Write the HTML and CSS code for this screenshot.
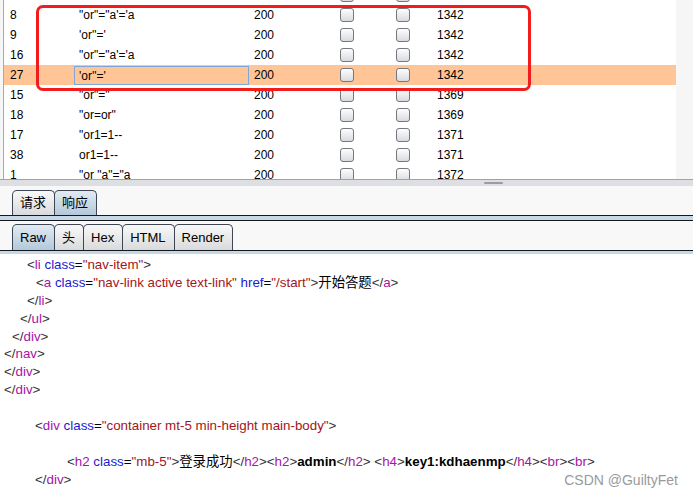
FILE: index.html
```html
<!DOCTYPE html>
<html lang="zh">
<head>
    <meta charset="UTF-8">
    <meta name="viewport" content="width=device-width, initial-scale=1.0">
    <title>Intruder 结果</title>
    <link rel="stylesheet" href="styles.css">
</head>
<body>
    <div class="results">
        <div class="grid">
            <div class="row row--cut">
                <span class="cell"></span>
                <span class="cell"></span>
                <span class="cell"></span>
                <span class="check"><i class="box"></i></span>
                <span class="check"><i class="box"></i></span>
                <span class="cell"></span>
            </div>
            <div class="row">
                <span class="cell">8</span>
                <span class="cell">"or"="a'='a</span>
                <span class="cell">200</span>
                <span class="check"><i class="box"></i></span>
                <span class="check"><i class="box"></i></span>
                <span class="cell">1342</span>
            </div>
            <div class="row">
                <span class="cell">9</span>
                <span class="cell">'or''='</span>
                <span class="cell">200</span>
                <span class="check"><i class="box"></i></span>
                <span class="check"><i class="box"></i></span>
                <span class="cell">1342</span>
            </div>
            <div class="row">
                <span class="cell">16</span>
                <span class="cell">"or"="a'='a</span>
                <span class="cell">200</span>
                <span class="check"><i class="box"></i></span>
                <span class="check"><i class="box"></i></span>
                <span class="cell">1342</span>
            </div>
            <div class="row is-selected">
                <span class="cell">27</span>
                <span class="cell is-editing">'or''='</span>
                <span class="cell">200</span>
                <span class="check"><i class="box"></i></span>
                <span class="check"><i class="box"></i></span>
                <span class="cell">1342</span>
            </div>
            <div class="row">
                <span class="cell">15</span>
                <span class="cell">"or"="</span>
                <span class="cell">200</span>
                <span class="check"><i class="box"></i></span>
                <span class="check"><i class="box"></i></span>
                <span class="cell">1369</span>
            </div>
            <div class="row">
                <span class="cell">18</span>
                <span class="cell">"or=or"</span>
                <span class="cell">200</span>
                <span class="check"><i class="box"></i></span>
                <span class="check"><i class="box"></i></span>
                <span class="cell">1369</span>
            </div>
            <div class="row">
                <span class="cell">17</span>
                <span class="cell">"or1=1--</span>
                <span class="cell">200</span>
                <span class="check"><i class="box"></i></span>
                <span class="check"><i class="box"></i></span>
                <span class="cell">1371</span>
            </div>
            <div class="row">
                <span class="cell">38</span>
                <span class="cell">or1=1--</span>
                <span class="cell">200</span>
                <span class="check"><i class="box"></i></span>
                <span class="check"><i class="box"></i></span>
                <span class="cell">1371</span>
            </div>
            <div class="row">
                <span class="cell">1</span>
                <span class="cell">"or "a"="a</span>
                <span class="cell">200</span>
                <span class="check"><i class="box"></i></span>
                <span class="check"><i class="box"></i></span>
                <span class="cell">1372</span>
            </div>
            <div class="mark"></div>
        </div>
        <div class="track"></div>
    </div>

    <div class="splitter"><span class="grip"></span></div>

    <div class="tabs">
        <span class="tab">请求</span>
        <span class="tab is-active">响应</span>
    </div>
    <div class="rule rule--closed"></div>

    <div class="tabs tabs--sub">
        <span class="tab is-active">Raw</span>
        <span class="tab">头</span>
        <span class="tab">Hex</span>
        <span class="tab">HTML</span>
        <span class="tab">Render</span>
    </div>
    <div class="rule"></div>

    <div class="code">
        <div class="line in-3"><b class="p">&lt;</b><b class="t">li</b> <b class="a">class</b>=<b class="v">"nav-item"</b><b class="p">&gt;</b></div>
        <div class="line in-4"><b class="p">&lt;</b><b class="t">a</b> <b class="a">class</b>=<b class="v">"nav-link active text-link"</b> <b class="a">href</b>=<b class="v">"/start"</b><b class="p">&gt;</b>开始答题<b class="p">&lt;/</b><b class="t">a</b><b class="p">&gt;</b></div>
        <div class="line in-3"><b class="p">&lt;/</b><b class="t">li</b><b class="p">&gt;</b></div>
        <div class="line in-2"><b class="p">&lt;/</b><b class="t">ul</b><b class="p">&gt;</b></div>
        <div class="line in-1"><b class="p">&lt;/</b><b class="t">div</b><b class="p">&gt;</b></div>
        <div class="line"><b class="p">&lt;/</b><b class="t">nav</b><b class="p">&gt;</b></div>
        <div class="line"><b class="p">&lt;/</b><b class="t">div</b><b class="p">&gt;</b></div>
        <div class="line"><b class="p">&lt;/</b><b class="t">div</b><b class="p">&gt;</b></div>
        <div class="line"></div>
        <div class="line tab-1"><b class="p">&lt;</b><b class="t">div</b> <b class="a">class</b>=<b class="v">"container mt-5 min-height main-body"</b><b class="p">&gt;</b></div>
        <div class="line"></div>
        <div class="line tab-2"><b class="p">&lt;</b><b class="t">h2</b> <b class="a">class</b>=<b class="v">"mb-5"</b><b class="p">&gt;</b>登录成功<b class="p">&lt;/</b><b class="t">h2</b><b class="p">&gt;&lt;</b><b class="t">h2</b><b class="p">&gt;</b><strong>admin</strong><b class="p">&lt;/</b><b class="t">h2</b><b class="p">&gt;</b> <b class="p">&lt;</b><b class="t">h4</b><b class="p">&gt;</b><strong>key1:kdhaenmp</strong><b class="p">&lt;/</b><b class="t">h4</b><b class="p">&gt;&lt;</b><b class="t">br</b><b class="p">&gt;&lt;</b><b class="t">br</b><b class="p">&gt;</b></div>
        <div class="line tab-1"><b class="p">&lt;/</b><b class="t">div</b><b class="p">&gt;</b></div>
        <div class="watermark">CSDN @GuiltyFet</div>
    </div>
</body>
</html>
```

FILE: styles.css
```css
html, body {
    margin: 0;
    height: 100%;
    overflow: hidden;
}
body {
    background: #f8f8f8;
    font-family: "Liberation Sans", Arial, "Noto Sans CJK SC", sans-serif;
    color: #000;
    display: flex;
    flex-direction: column;
}
.results {
    display: flex;
    height: 180px;
    flex: none;
    padding-left: 3px;
    box-sizing: border-box;
    border-bottom: 1px solid #9ea3ab;
    background: #f6f6f6;
}
.grid {
    position: relative;
    flex: 1;
    background: #fff;
    border-left: 1px solid #a9a9a9;
    overflow: hidden;
}
.track {
    width: 17px;
}
.row {
    display: grid;
    grid-template-columns: 69px 175px 91px 56px 36px 1fr;
    height: 20px;
    padding-left: 1px;
    align-items: center;
    font-size: 12px;
}
.row--cut {
    margin-top: -15px;
}
.row.is-selected {
    background: #ffc596;
}
.cell {
    padding-left: 5px;
    white-space: pre;
    line-height: 19px;
}
.cell.is-editing {
    border: 1px solid #7ea7d8;
    padding-left: 4px;
    height: 19px;
    line-height: 18px;
    box-sizing: border-box;
    margin-top: 1px;
}
.check {
    display: flex;
    align-items: center;
}
.box {
    display: block;
    width: 14px;
    height: 14px;
    box-sizing: border-box;
    border: 1px solid #74777c;
    border-radius: 3px;
    background: linear-gradient(#fdfdfd, #d9dbe1);
}
.mark {
    position: absolute;
    left: 32px;
    top: 5px;
    width: 495px;
    height: 86px;
    box-sizing: border-box;
    border: 3px solid #f21c1c;
    border-radius: 7px;
}
.splitter {
    flex: none;
    height: 6px;
    background: #dedfe3;
    position: relative;
}
.grip {
    position: absolute;
    left: 484px;
    top: 2px;
    width: 19px;
    height: 2px;
    border-radius: 2px;
    background: #9a9ca2;
}
.tabs {
    flex: none;
    display: flex;
    padding: 4px 0 0 12px;
}
.tabs--sub {
    padding-top: 3px;
}
.tab {
    height: 24px;
    line-height: 24px;
    padding: 0 8px 0 7px;
    font-size: 13px;
    border: 1px solid #3e4654;
    border-bottom: 0;
    border-radius: 5px 5px 0 0;
    background: linear-gradient(#f9f9f9, #d9dadc);
    margin-right: -1px;
}
.tabs--sub .tab {
    height: 25px;
    line-height: 26px;
}
.tab.is-active {
    background: linear-gradient(#e2ebf3, #b3c8da);
}
.rule {
    flex: none;
    height: 3px;
    background: #c7d7e6;
    border-top: 1px solid #14181f;
}
.rule--closed {
    height: 4px;
    border-bottom: 1px solid #14181f;
}
.code {
    position: relative;
    flex: 1;
    background: #fff;
    padding: 2px 0 0 4px;
    font-size: 13.35px;
    line-height: 17.9px;
    color: #000;
}
.line {
    height: 17.9px;
    white-space: pre;
}
.line b {
    font-weight: normal;
}
.line strong {
    font-weight: bold;
}
.p { color: #333; }
.t { color: #a812a8; }
.a { color: #1a1ad0; }
.v { color: #a3151b; }
.in-1 { padding-left: 8px; }
.in-2 { padding-left: 16px; }
.in-3 { padding-left: 23px; }
.in-4 { padding-left: 32px; }
.tab-1 { padding-left: 31px; }
.tab-2 { padding-left: 63px; }
.watermark {
    position: absolute;
    right: 15px;
    top: 217px;
    font-size: 14px;
    color: #9a9a9a;
    line-height: 18px;
}
```
